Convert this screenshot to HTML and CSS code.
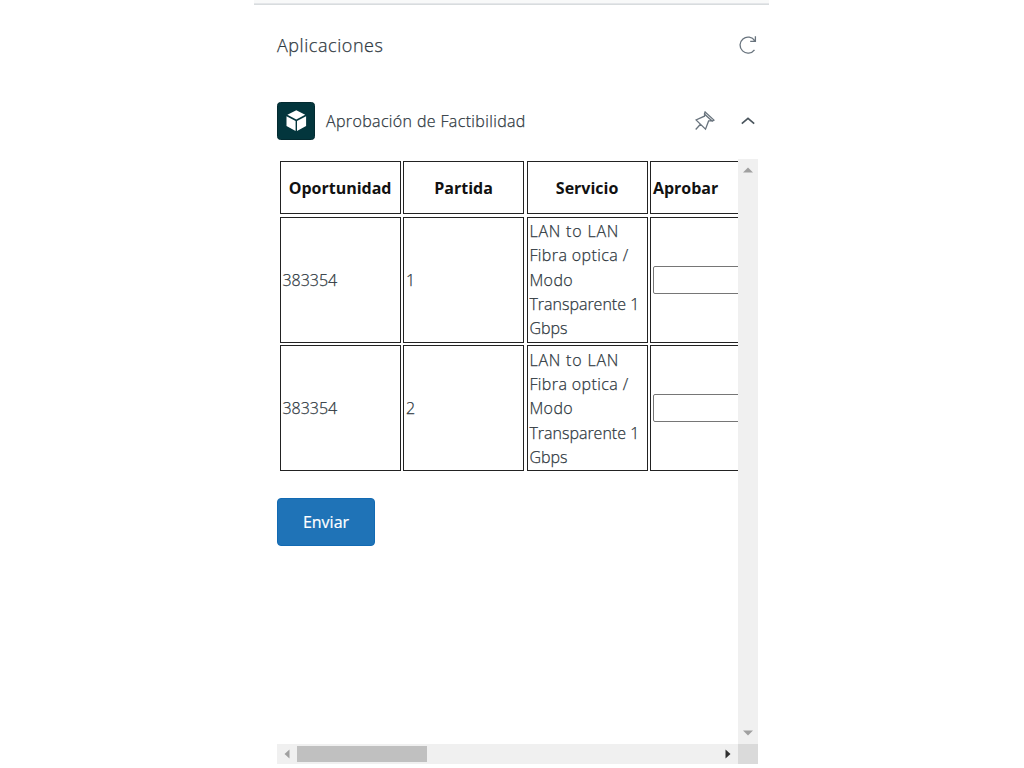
FILE: index.html
```html
<!DOCTYPE html>
<html lang="es">
<head>
<meta charset="utf-8">
<title>Aplicaciones</title>
<link rel="stylesheet" href="styles.css">
</head>
<body>
<main class="panel">
  <header class="panel-head">
    <h1 class="title">Aplicaciones</h1>
    <svg class="refresh" width="20" height="20" viewBox="0 0 20 20"><path d="M16.5 14.8A8 8 0 1 1 16.8 5.8M17.4 1.2V6.3H12.2"/></svg>
  </header>
  <section class="app-head">
    <svg class="logo" width="38" height="38" viewBox="0 0 38 38"><rect x=".5" y=".5" width="37" height="37" rx="3"/><path d="M19.3 8.2 28.2 12.8 19.3 17.5 10.4 12.8ZM9.5 14.2 18.6 19V29L9.5 24.1ZM29.1 14.2 20 19V29L29.1 24.1Z"/></svg>
    <h2 class="app-name">Aprobación de Factibilidad</h2>
    <svg class="pin" width="20" height="20" viewBox="0 0 20 20"><path d="M10.1.9 19 9.1 17.2 10.1 9.4 3.1ZM9.8 3.8 9.4 5.2 1 8.9 10.5 18.2 13.6 9.9 16.5 9.7M5.5 13.3.7 18.5"/></svg>
    <svg class="chevron" width="16" height="10" viewBox="0 0 16 10"><path d="M1.8 7.7 8 2.3 14.2 7.7"/></svg>
  </section>
  <section class="frame">
    <div class="view">
      <div class="table">
        <div class="cell th">Oportunidad</div>
        <div class="cell th">Partida</div>
        <div class="cell th">Servicio</div>
        <div class="cell th last">Aprobar</div>
        <div class="cell">383354</div>
        <div class="cell">1</div>
        <div class="cell"><p class="service"><span class="wide">LAN to LAN</span><br><span class="mid">Fibra optica /</span><br><span class="mid">Modo</span><br>Transparente 1<br>Gbps</p></div>
        <div class="cell"><input class="field" aria-label="Aprobar partida 1"></div>
        <div class="cell">383354</div>
        <div class="cell">2</div>
        <div class="cell"><p class="service"><span class="wide">LAN to LAN</span><br><span class="mid">Fibra optica /</span><br><span class="mid">Modo</span><br>Transparente 1<br>Gbps</p></div>
        <div class="cell"><input class="field" aria-label="Aprobar partida 2"></div>
      </div>
      <button class="send">Enviar</button>
    </div>
    <div class="vbar">
      <svg width="10" height="6" viewBox="0 0 10 6"><path d="M0 5.5 5 .5 10 5.5Z"/></svg>
      <svg width="10" height="6" viewBox="0 0 10 6"><path d="M0 .5 5 5.5 10 .5Z"/></svg>
    </div>
    <div class="hbar">
      <svg width="6" height="10" viewBox="0 0 6 10"><path d="M5.5 .5.5 5 5.5 9.5Z"/></svg>
      <div class="thumb"></div>
      <svg class="active" width="6" height="10" viewBox="0 0 6 10"><path d="M.5 .5 5.5 5 .5 9.5Z"/></svg>
    </div>
    <div class="corner"></div>
  </section>
</main>
</body>
</html>
```
FILE: styles.css
```css
* { box-sizing: border-box; }
body {
  margin: 0;
  height: 768px;
  overflow: hidden;
  background: #fff;
  color: #2f3941;
  font: 16px/24.3px "Open Sans", "Noto Sans", sans-serif;
}
svg { display: block; flex: none; }
.panel {
  width: 515px;
  height: 768px;
  margin-left: 254px;
  padding: 0 11px 0 23px;
  border-top: 3px solid #f8f9f9;
}
.panel::before {
  content: "";
  display: block;
  height: 2px;
  margin: 0 -11px 0 -23px;
  background: linear-gradient(#e4e6e9 50%, #d8dcde 50%);
}
.panel-head {
  display: flex;
  align-items: center;
  justify-content: space-between;
  height: 80px;
}
.title, .app-name { margin: 0; font-weight: 300; white-space: nowrap; -webkit-text-stroke: .25px; }
.title { font-size: 18px; letter-spacing: .55px; }
.refresh, .pin, .chevron { fill: none; stroke: #68737d; stroke-width: 1.3; }
.app-head {
  display: flex;
  align-items: center;
  height: 74px;
  padding: 0 2px 2px 0;
}
.logo rect { fill: #03363d; stroke: #032a30; }
.logo path { fill: #fff; }
.app-name { margin-left: 11px; flex: 1; font-size: 16px; letter-spacing: .36px; }
.pin { margin-right: 25px; }
.chevron { stroke: #49545c; stroke-width: 1.6; }
.frame {
  display: grid;
  grid-template: 585px 20px / 461px 20px;
  width: 481px;
}
.view { overflow: hidden; padding: 2px 0 0 2.6px; }
.table {
  display: grid;
  grid-template-columns: repeat(4, 121px);
  grid-template-rows: 53px 126px 126px;
  column-gap: 2.5px;
  row-gap: 2.6px;
  width: 492px;
}
.cell {
  display: flex;
  align-items: center;
  padding: .6px 1.8px 0;
  border: 1px solid #222;
  font-weight: 300;
  white-space: nowrap;
  -webkit-text-stroke: .25px;
}
.th { justify-content: center; padding-top: 1px; color: #111; font-weight: 700; -webkit-text-stroke: 0; }
.last { justify-content: flex-start; }
.service { margin: 0; }
.wide { letter-spacing: .8px; }
.mid { letter-spacing: .4px; }
.field {
  width: 115px;
  height: 28px;
  padding: 0;
  border: 1px solid #767676;
  border-radius: 2px;
  background: #fff;
}
.send {
  display: flex;
  align-items: center;
  justify-content: center;
  width: 98px;
  height: 48px;
  margin: 27px 0 0 -2.6px;
  padding: 0;
  border: 1px solid #126ab3;
  border-radius: 4px;
  background: #1f73b7;
  color: #fff;
  font: 400 16px/24px "Open Sans", "Noto Sans", sans-serif;
  -webkit-text-stroke: .2px;
}
.vbar {
  display: flex;
  flex-direction: column;
  justify-content: space-between;
  align-items: center;
  padding: 8px 0;
  background: #f0f0f0;
}
.hbar {
  display: flex;
  align-items: center;
  padding: 0 7px;
  background: #f0f0f0;
}
.vbar path, .hbar path { fill: #a0a0a0; }
.hbar .active { margin-left: auto; }
.hbar .active path { fill: #303030; }
.thumb { width: 130px; height: 16px; margin-left: 7.4px; background: #c0c0c0; }
.corner { background: #dadada; }
```
